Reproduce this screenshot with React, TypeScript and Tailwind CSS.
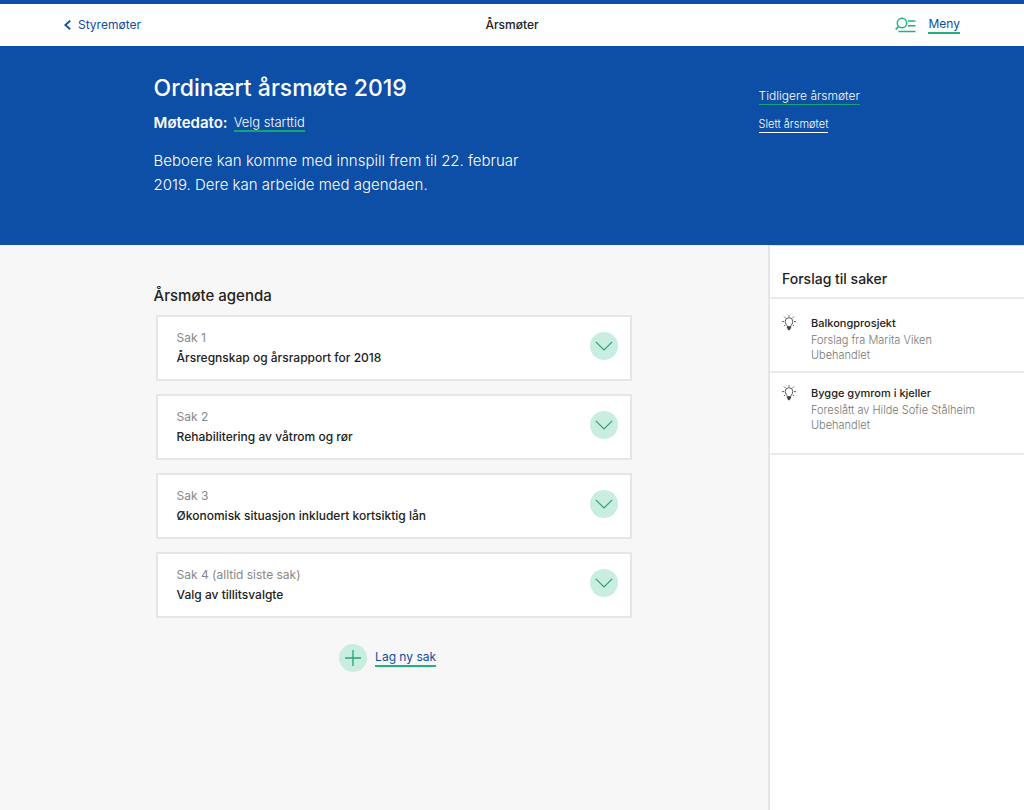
interface IAgendaItem {
  label: string;
  title: string;
}

interface IProposal {
  title: string;
  from: string;
  status: string;
}

const agenda: IAgendaItem[] = [
  { label: "Sak 1", title: "Årsregnskap og årsrapport for 2018" },
  { label: "Sak 2", title: "Rehabilitering av våtrom og rør" },
  { label: "Sak 3", title: "Økonomisk situasjon inkludert kortsiktig lån" },
  { label: "Sak 4 (alltid siste sak)", title: "Valg av tillitsvalgte" },
];

const proposals: IProposal[] = [
  {
    title: "Balkongprosjekt",
    from: "Forslag fra Marita Viken",
    status: "Ubehandlet",
  },
  {
    title: "Bygge gymrom i kjeller",
    from: "Foreslått av Hilde Sofie Stålheim",
    status: "Ubehandlet",
  },
];

function BackIcon() {
  return (
    <svg
      width="7"
      height="10"
      viewBox="0 0 7 10"
      fill="none"
      stroke="#0d4ea6"
      strokeWidth="1.8"
      aria-hidden="true"
    >
      <path d="M6.2 .8 1.3 5l4.9 4.2" />
    </svg>
  );
}

function SearchMenuIcon() {
  return (
    <svg
      width="21"
      height="16"
      viewBox="0 0 21 16"
      fill="none"
      stroke="#1fb17e"
      strokeWidth="1.5"
      aria-hidden="true"
    >
      <circle cx="7" cy="6" r="4.7" />
      <path d="M3.7 9.4 0.7 12.4M13 4h7.5M13 8.8h7.5M3.5 14.5h17" />
    </svg>
  );
}

function BulbIcon() {
  return (
    <svg
      width="14"
      height="16"
      viewBox="0 0 14 16"
      fill="none"
      stroke="#444"
      strokeWidth="0.9"
      strokeLinecap="round"
      aria-hidden="true"
    >
      <path d="M5.2 11.2C5.2 9.8 3.2 9 3.2 6.5a3.8 3.8 0 0 1 7.6 0c0 2.5-2 3.3-2 4.7z" />
      <path d="M5.4 12.4h3.2M5.8 13.6h2.4M6.5 14.6h1" strokeWidth="1.2" />
      <path d="M7 0.5v.8M2.4 1.9l.7.7M11.6 1.9l-.7.7M.5 6.6h1.1M12.4 6.6h1.1M2.3 10.8l.7-.7M11.7 10.8l-.7-.7" />
    </svg>
  );
}

function AgendaCard({ item }: { item: IAgendaItem }) {
  return (
    <li className="flex items-start justify-between border-2 border-[#e6e6e6] bg-white pl-[19px] pr-3 py-[11px]">
      <div className="text-[12px] leading-5">
        <p className="text-[#888]">{item.label}</p>
        <h3 className="font-medium text-[#222]">{item.title}</h3>
      </div>
      <button
        aria-label={`Vis ${item.title}`}
        className="mt-1 flex size-7 shrink-0 items-center justify-center rounded-full bg-[#c9eee0] cursor-pointer"
      >
        <svg
          width="18"
          height="10"
          viewBox="0 0 18 10"
          fill="none"
          stroke="#2f9c78"
          strokeWidth="1.2"
          aria-hidden="true"
        >
          <path d="M.8.8 9 9 17.2.8" />
        </svg>
      </button>
    </li>
  );
}

export default function App() {
  return (
    <div className="flex min-h-screen flex-col bg-[#f7f7f7] font-['Inter','Liberation_Sans',sans-serif] text-[#222]">
      <header className="grid grid-cols-3 items-center border-t-4 border-[#0d4ea6] bg-white px-[6.25%] py-[11px]">
        <a
          href="#"
          className="flex items-center gap-[7px] text-[12px] leading-5 text-[#0d4ea6]"
        >
          <BackIcon />
          Styremøter
        </a>
        <h2 className="text-center text-[12px] leading-5 font-medium">
          Årsmøter
        </h2>
        <div className="flex items-center justify-end gap-3">
          <SearchMenuIcon />
          <a
            href="#"
            className="border-b-2 border-[#1fb17e] text-[12px] leading-4 text-[#0d4ea6]"
          >
            Meny
          </a>
        </div>
      </header>

      <section className="flex justify-between bg-[#0d4ea6] pl-[15%] pt-[26px] pb-12 text-white">
        <div>
          <h1 className="text-[23px] leading-8 font-medium">
            Ordinært årsmøte 2019
          </h1>
          <div className="mt-[9px] flex items-center gap-1.5">
            <span className="text-[15px] leading-5 font-semibold">
              Møtedato:
            </span>
            <a
              href="#"
              className="border-b-2 border-[#12a572] text-[13px] leading-4 font-light"
            >
              Velg starttid
            </a>
          </div>
          <p className="mt-4 max-w-[380px] text-[15px] leading-6 font-light">
            Beboere kan komme med innspill frem til 22. februar 2019. Dere kan
            arbeide med agendaen.
          </p>
        </div>
        <div className="flex w-[30.5%] flex-col items-start gap-[11px] pt-4">
          <a
            href="#"
            className="border-b border-[#12a572] text-[12px] leading-4 font-light"
          >
            Tidligere årsmøter
          </a>
          <a
            href="#"
            className="border-b border-white text-[11px] leading-4 font-light"
          >
            Slett årsmøtet
          </a>
        </div>
      </section>

      <div className="flex grow">
        <main className="w-3/4 pl-[15%] pt-[41px]">
          <h2 className="text-[15px] leading-5 font-medium">Årsmøte agenda</h2>
          <ul className="mt-[9px] ml-0.5 flex max-w-[476px] flex-col gap-[13px]">
            {agenda.map((item) => (
              <AgendaCard key={item.label} item={item} />
            ))}
          </ul>
          <div className="mt-[26px] flex max-w-[468px] items-center justify-center gap-2">
            <button
              aria-label="Lag ny sak"
              className="flex size-7 items-center justify-center rounded-full bg-[#c9eee0] cursor-pointer"
            >
              <svg
                width="16"
                height="16"
                viewBox="0 0 16 16"
                stroke="#1fa578"
                strokeWidth="1.3"
                aria-hidden="true"
              >
                <path d="M8 0v16M0 8h16" />
              </svg>
            </button>
            <a
              href="#"
              className="border-b-2 border-[#1fb17e] text-[12px] leading-4 text-[#0d4ea6]"
            >
              Lag ny sak
            </a>
          </div>
        </main>

        <aside className="w-1/4 border-l-2 border-t border-[#e6e6e6] bg-white">
          <h2 className="border-b-2 border-[#e9e9e9] pl-3 pt-[23px] pb-2 text-[14px] leading-5 font-medium">
            Forslag til saker
          </h2>
          <ul>
            {proposals.map((proposal) => (
              <li
                key={proposal.title}
                className="flex gap-[15px] border-b-2 border-[#e9e9e9] pl-3 pt-4 pb-2 last:pt-3 last:pb-5"
              >
                <BulbIcon />
                <div className="text-[11px] leading-[15px]">
                  <h3 className="mb-0.5 leading-4 font-medium text-[#222]">
                    {proposal.title}
                  </h3>
                  <p className="font-light text-[#777]">{proposal.from}</p>
                  <p className="font-light text-[#777]">{proposal.status}</p>
                </div>
              </li>
            ))}
          </ul>
        </aside>
      </div>
    </div>
  );
}
